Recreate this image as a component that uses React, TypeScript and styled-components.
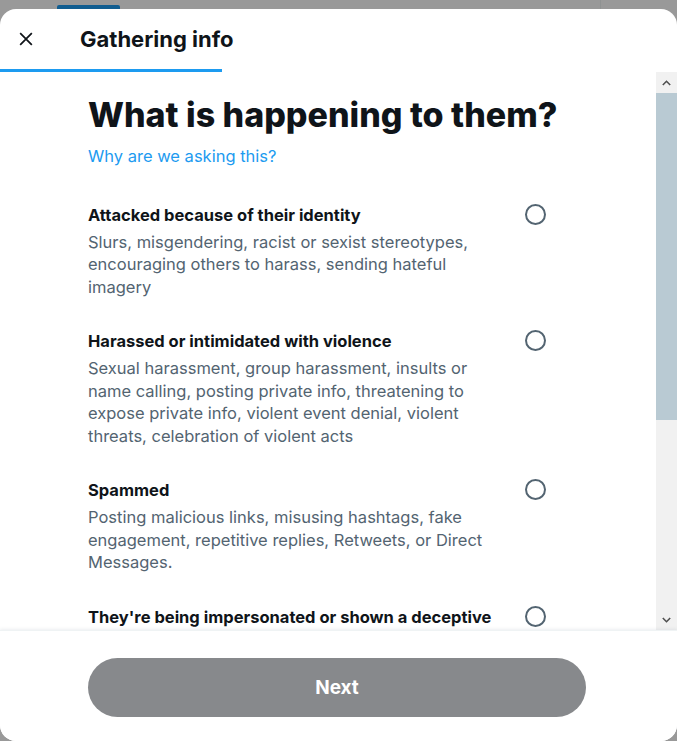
import React from "react";
import styled, { createGlobalStyle } from "styled-components";

const GlobalStyle = createGlobalStyle`
  html, body {
    margin: 0;
    padding: 0;
    background: #999999;
    font-family: Inter, "Noto Sans", "Liberation Sans", sans-serif;
    color: #0f1419;
    overflow: hidden;
  }
  * { box-sizing: border-box; }
`;

const Page = styled.div`
  height: 741px;
  display: flex;
  flex-direction: column;
`;

const TopStrip = styled.div`
  height: 9px;
  display: flex;
  align-items: flex-end;
  flex-shrink: 0;
`;

const TabIndicator = styled.div`
  margin-left: 57px;
  width: 63px;
  height: 4px;
  border-radius: 2px 2px 0 0;
  background: #115d90;
`;

const StripDivider = styled.div`
  margin-left: 480px;
  width: 1px;
  height: 9px;
  background: #8f9292;
`;

const Modal = styled.div`
  flex: 1;
  min-height: 0;
  background: #ffffff;
  border-radius: 16px;
  overflow: hidden;
  display: flex;
  flex-direction: column;
`;

const Header = styled.div`
  height: 60px;
  flex-shrink: 0;
  display: flex;
  align-items: center;
  padding-left: 8px;
`;

const CloseButton = styled.button`
  width: 36px;
  height: 36px;
  border: none;
  background: transparent;
  padding: 0;
  display: flex;
  align-items: center;
  justify-content: center;
  color: #0f1419;
  cursor: pointer;
`;

const HeaderTitle = styled.h2`
  margin: 0 0 0 36px;
  font-size: 22px;
  line-height: 26px;
  font-weight: 700;
  color: #0f1419;
`;

const ProgressTrack = styled.div`
  height: 3px;
  flex-shrink: 0;
  background: #ffffff;
`;

const ProgressFill = styled.div<{ $width: number }>`
  height: 100%;
  width: ${(p) => p.$width}px;
  background: #1d9bf0;
`;

const Body = styled.div`
  flex: 1;
  min-height: 0;
  display: flex;
`;

const ScrollArea = styled.div`
  flex: 1;
  min-width: 0;
  overflow: hidden;
  padding: 23px 88px 0 88px;
`;

const Heading = styled.h1`
  margin: 0;
  font-size: 34px;
  line-height: 40px;
  font-weight: 800;
  color: #0f1419;
`;

const WhyLink = styled.a`
  display: block;
  margin-top: 10px;
  font-size: 16.5px;
  line-height: 22px;
  color: #1d9bf0;
  text-decoration: none;
`;

const OptionList = styled.div`
  margin-top: 36.5px;
  display: flex;
  flex-direction: column;
  gap: 32px;
`;

const OptionRow = styled.label`
  display: flex;
  align-items: flex-start;
  cursor: pointer;
`;

const OptionText = styled.div`
  flex: 1;
  min-width: 0;
`;

const OptionTitle = styled.div`
  font-size: 16.5px;
  line-height: 22.5px;
  font-weight: 700;
  color: #0f1419;
`;

const OptionDesc = styled.div`
  margin-top: 4.5px;
  font-size: 16.5px;
  line-height: 22.5px;
  color: #536471;
`;

const RadioCell = styled.div`
  width: 68px;
  flex-shrink: 0;
  display: flex;
  justify-content: center;
  padding-left: 2px;
`;

const Radio = styled.span`
  width: 21px;
  height: 21px;
  border-radius: 50%;
  border: 2px solid #536471;
  display: block;
`;

const Scrollbar = styled.div`
  width: 21px;
  flex-shrink: 0;
  display: flex;
  flex-direction: column;
  background: #f1f1f1;
`;

const ScrollButton = styled.div`
  height: 21px;
  flex-shrink: 0;
  display: flex;
  align-items: center;
  justify-content: center;
  color: #505050;
`;

const ScrollThumb = styled.div<{ $height: number }>`
  height: ${(p) => p.$height}px;
  flex-shrink: 0;
  background: #b9cad3;
`;

const ScrollTrackRest = styled.div`
  flex: 1;
`;

const Footer = styled.div`
  flex-shrink: 0;
  height: 111px;
  display: flex;
  justify-content: center;
  padding-top: 27px;
  border-top: 1px solid #eff3f4;
  box-shadow: 0 -1px 3px rgba(101, 119, 134, 0.12);
  background: #ffffff;
  position: relative;
`;

const NextButton = styled.button`
  width: 498px;
  height: 59px;
  margin-left: -3px;
  border: none;
  border-radius: 9999px;
  background: #87898c;
  color: #ffffff;
  font-family: inherit;
  font-size: 19px;
  font-weight: 700;
  cursor: default;
`;

const options = [
  {
    title: "Attacked because of their identity",
    desc: "Slurs, misgendering, racist or sexist stereotypes, encouraging others to harass, sending hateful imagery",
  },
  {
    title: "Harassed or intimidated with violence",
    desc: "Sexual harassment, group harassment, insults or name calling, posting private info, threatening to expose private info, violent event denial, violent threats, celebration of violent acts",
  },
  {
    title: "Spammed",
    desc: "Posting malicious links, misusing hashtags, fake engagement, repetitive replies, Retweets, or Direct Messages.",
  },
  {
    title: "They're being impersonated or shown a deceptive identity",
    desc: "Pretending to be someone else, including as a joke, or using a fake identity",
  },
];

const CloseIcon = () => (
  <svg width="20" height="20" viewBox="0 0 24 24" fill="none">
    <path d="M5 5 L19 19 M19 5 L5 19" stroke="currentColor" strokeWidth="2.1" strokeLinecap="butt" />
  </svg>
);

const Chevron = ({ up }: { up?: boolean }) => (
  <svg width="9" height="6" viewBox="0 0 9 6">
    <path
      d={up ? "M0.8 5 L4.5 1.3 L8.2 5" : "M0.8 1 L4.5 4.7 L8.2 1"}
      fill="none"
      stroke="currentColor"
      strokeWidth="1.6"
    />
  </svg>
);

export default function App() {
  return (
    <>
      <GlobalStyle />
      <Page>
        <TopStrip>
          <TabIndicator />
          <StripDivider />
        </TopStrip>
        <Modal>
          <Header>
            <CloseButton aria-label="Close">
              <CloseIcon />
            </CloseButton>
            <HeaderTitle>Gathering info</HeaderTitle>
          </Header>
          <ProgressTrack>
            <ProgressFill $width={222} />
          </ProgressTrack>
          <Body>
            <ScrollArea>
              <Heading>What is happening to them?</Heading>
              <WhyLink href="#">Why are we asking this?</WhyLink>
              <OptionList>
                {options.map((o) => (
                  <OptionRow key={o.title}>
                    <OptionText>
                      <OptionTitle>{o.title}</OptionTitle>
                      <OptionDesc>{o.desc}</OptionDesc>
                    </OptionText>
                    <RadioCell>
                      <Radio />
                    </RadioCell>
                  </OptionRow>
                ))}
              </OptionList>
            </ScrollArea>
            <Scrollbar>
              <ScrollButton>
                <Chevron up />
              </ScrollButton>
              <ScrollThumb $height={327} />
              <ScrollTrackRest />
              <ScrollButton>
                <Chevron />
              </ScrollButton>
            </Scrollbar>
          </Body>
          <Footer>
            <NextButton disabled>Next</NextButton>
          </Footer>
        </Modal>
      </Page>
    </>
  );
}
